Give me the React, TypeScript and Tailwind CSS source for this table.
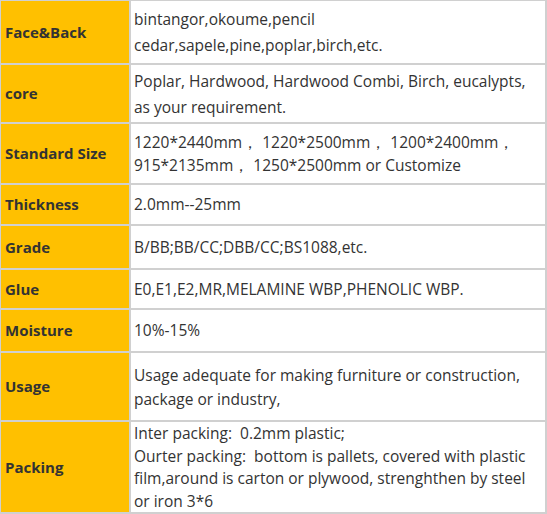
import React from "react";

const rows: { label: string; lines: string[]; h: string; lh: string }[] = [
  { label: "Face&Back", lines: ["bintangor,okoume,pencil", "cedar,sapele,pine,poplar,birch,etc."], h: "h-[62px]", lh: "leading-[26px]" },
  { label: "core", lines: ["Poplar, Hardwood, Hardwood Combi, Birch, eucalypts,", "as your requirement."], h: "h-[57px]", lh: "leading-[26px]" },
  { label: "Standard Size", lines: ["1220*2440mm\uFF0C 1220*2500mm\uFF0C 1200*2400mm\uFF0C", "915*2135mm\uFF0C 1250*2500mm or Customize"], h: "h-[59px]", lh: "leading-[23px]" },
  { label: "Thickness", lines: ["2.0mm--25mm"], h: "h-[39px]", lh: "leading-[23px]" },
  { label: "Grade", lines: ["B/BB;BB/CC;DBB/CC;BS1088,etc."], h: "h-[42px]", lh: "leading-[23px]" },
  { label: "Glue", lines: ["E0,E1,E2,MR,MELAMINE WBP,PHENOLIC WBP."], h: "h-[38px]", lh: "leading-[23px]" },
  { label: "Moisture", lines: ["10%-15%"], h: "h-[41px]", lh: "leading-[23px]" },
  { label: "Usage", lines: ["Usage adequate for making furniture or construction,", "package or industry,"], h: "h-[67px]", lh: "leading-[24px]" },
  {
    label: "Packing",
    lines: [
      "Inter packing:  0.2mm plastic;",
      "Ourter packing:  bottom is pallets, covered with plastic",
      "film,around is carton or plywood, strenghthen by steel",
      "or iron 3*6",
    ],
    h: "h-[90px]",
    lh: "leading-[22.5px]",
  },
];

export default function App() {
  return (
    <div className="w-[547px] h-[514px] bg-[#d0d0d0] pt-px pl-px pr-[2px] pb-[2px] font-['Open_Sans',sans-serif]">
      <div className="grid grid-cols-[128px_414px] gap-[2px]">
        {rows.map((r) => (
          <React.Fragment key={r.label}>
            <div className={`${r.h} bg-[#ffc000] flex items-center pl-[4px] text-[15px] font-bold text-[#333333]`}>
              {r.label}
            </div>
            <div className={`${r.h} ${r.lh} bg-white flex flex-col justify-center pl-[3px] text-[15.5px] text-[#333333] whitespace-pre`}>
              {r.lines.map((l, i) => (
                <div key={i}>{l}</div>
              ))}
            </div>
          </React.Fragment>
        ))}
      </div>
    </div>
  );
}
